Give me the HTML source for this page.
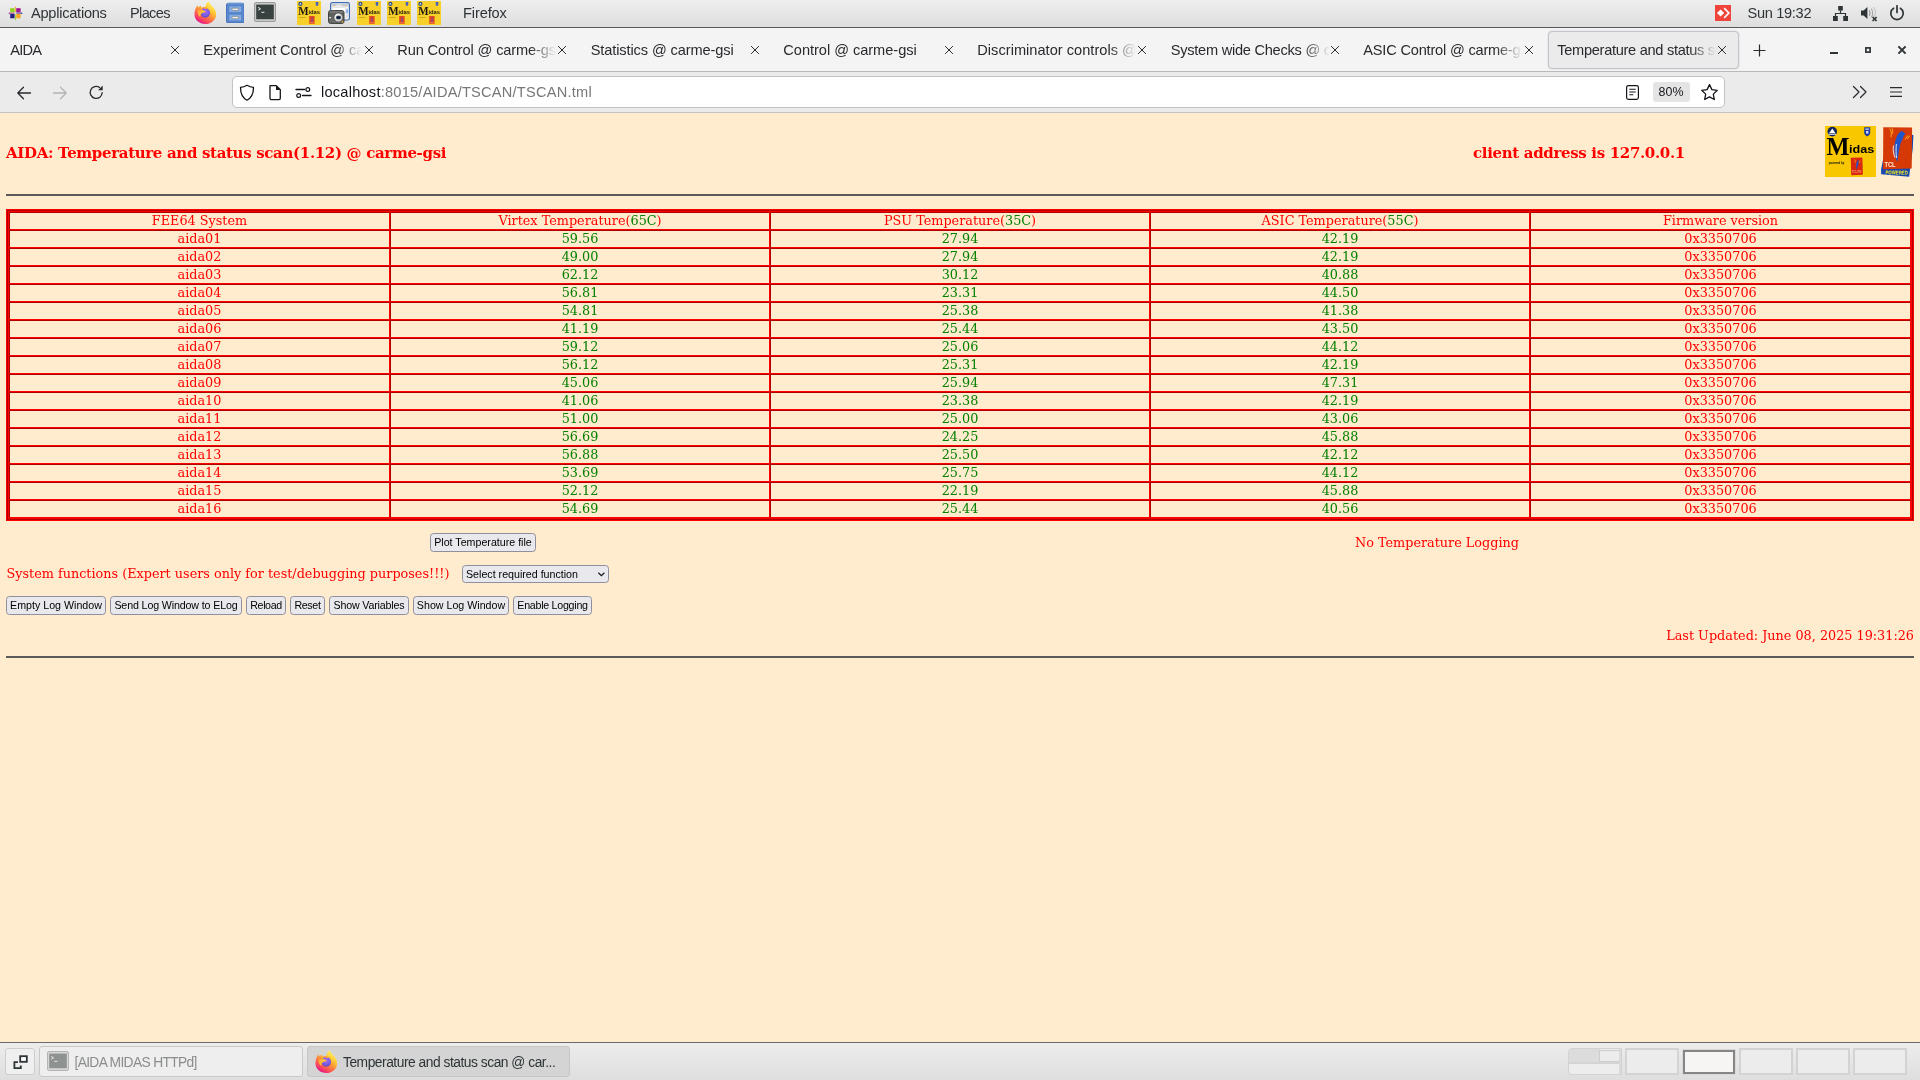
<!DOCTYPE html>
<html lang="en">
<head>
<meta charset="utf-8">
<title>Temperature and status scan @ carme-gsi</title>
<style>
html,body{margin:0;padding:0;}
body{width:1920px;height:1080px;overflow:hidden;position:relative;background:#ffebcd;font-family:"Liberation Sans","DejaVu Sans",sans-serif;}
#root{position:absolute;left:0;top:0;width:1920px;height:1080px;will-change:transform;}
.abs{position:absolute;}
/* ---------- GNOME top bar ---------- */
#topbar{position:absolute;left:0;top:0;width:1920px;height:27px;background:linear-gradient(#eeeeee,#dedede);border-bottom:1px solid #585858;}
#topbar .t{position:absolute;top:0;height:27px;line-height:26px;font-size:14.6px;color:#2e3436;white-space:nowrap;}
/* ---------- Firefox tab bar ---------- */
#tabbar{position:absolute;left:0;top:28px;width:1920px;height:43px;background:#f4f4f4;border-bottom:1px solid #b9b9b9;}
.tab{position:absolute;top:0.700px;height:43px;width:168px;overflow:hidden;white-space:nowrap;font-size:14.6px;line-height:42px;color:#2a2a2e;}
.tab.fade{-webkit-mask-image:linear-gradient(90deg,#000 0,#000 calc(100% - 26px),transparent 100%);mask-image:linear-gradient(90deg,#000 0,#000 calc(100% - 26px),transparent 100%);}
.tx{position:absolute;top:0;height:43px;line-height:42px;width:12px;text-align:center;}
#acttab{position:absolute;left:1548px;top:3px;width:189px;height:36px;border:1px solid #c3c3cb;border-radius:4px;background:#ebebeb;box-shadow:0 0 2px rgba(0,0,0,.15);}
/* ---------- Firefox toolbar ---------- */
#toolbar{position:absolute;left:0;top:72px;width:1920px;height:40px;background:#ebebeb;border-bottom:1px solid #c2c2c2;}
#urlbar{position:absolute;left:232px;top:4px;width:1491px;height:30px;background:#fff;border:1px solid #c2c2c6;border-radius:5px;}
#urltext{position:absolute;left:88px;top:1px;letter-spacing:0.231px;height:30px;line-height:29px;font-size:14.6px;color:#77777a;white-space:nowrap;}
#urltext b{font-weight:normal;color:#15141a;}
#zoombadge{position:absolute;left:1419.500px;top:5px;width:37px;height:20px;background:#e4e4e4;border-radius:3px;font-size:12.4px;line-height:20px;text-align:center;color:#15141a;}
/* ---------- page ---------- */
#page{position:absolute;left:0;top:113px;width:1920px;height:929px;background:#ffebcd;font-family:"DejaVu Serif","Liberation Serif",serif;color:#f00;}
.hr{position:absolute;left:6px;width:1908px;height:2px;background:#5b5b5b;}
.h{position:absolute;font-weight:bold;font-size:14.98px;letter-spacing:-0.32px;white-space:nowrap;line-height:20px;}
.p{position:absolute;font-size:12.8px;white-space:nowrap;line-height:16px;}
/* table */
#tb{position:absolute;left:6px;top:96px;width:1908px;height:312px;background:#f00;}
#tb .r2{position:absolute;left:1px;top:1px;right:1px;bottom:1px;background:#b00000;}
#tb .r3{position:absolute;left:1px;top:1px;right:1px;bottom:1px;background:#f00;}
#tb table{position:absolute;left:1px;top:1px;width:1902px;height:306px;border-collapse:separate;border-spacing:0;table-layout:fixed;background:#ffebcd;}
#tb td{height:16px;padding:0;border:1px solid;border-color:#b00000 #f00 #f00 #b00000;text-align:center;font-size:12.8px;line-height:16px;color:#f00;overflow:hidden;white-space:nowrap;}
#tb td.g{color:#008000;}
#tb span.g{color:#008000;}
/* form controls */
.btn{position:absolute;height:19px;box-sizing:border-box;border:1px solid #8f8f9d;border-radius:3.5px;background:#e9e9ed;color:#000;font-family:"Liberation Sans","DejaVu Sans",sans-serif;font-size:10.67px;line-height:17px;text-align:center;white-space:nowrap;}
/* ---------- bottom panel ---------- */
.ws{top:5px;width:54px;height:27px;box-sizing:border-box;border:2px solid #d3d3d3;background:#ececec;}
#panel{position:absolute;left:0;top:1042px;width:1920px;height:38px;background:linear-gradient(#ededed,#dedede);border-top:1px solid #6a6a6a;box-sizing:border-box;}
</style>
</head>
<body>
<div id="root">
<div id="topbar">
<svg class="abs" style="left:8px;top:6px" width="15" height="15" viewBox="0 0 15 15"><rect x="2.200" y="2.200" width="4.400" height="4.200" fill="#93d31e"/><rect x="8.200" y="2.200" width="4.400" height="4.200" fill="#a3158c"/><rect x="2.200" y="7.900" width="4.400" height="4.400" fill="#27207f"/><rect x="8.200" y="7.900" width="4.400" height="4.400" fill="#f9a825"/><path d="M7.400 0.400l1 1.200h-.6v5h-.8v-5h-.6z" fill="#f9a825"/><path d="M14.600 7.200l-1.200 1v-.6h-5v-.8h5v-.6z" fill="#27207f"/><path d="M7.400 14.400l-1-1.200h.6v-5h.8v5h.6z" fill="#93d31e"/><path d="M0.400 7.200l1.200-1v.6h5v.8h-5v.6z" fill="#a3158c"/></svg>
<div class="t" style="left:31px;letter-spacing:-0.253px">Applications</div>
<div class="t" style="left:130px;letter-spacing:-0.667px">Places</div>
<svg class="abs" style="left:193.5px;top:0.8px" width="22.6" height="23.4" viewBox="0 0 23 24"><defs><linearGradient id="faa" x1="0.800" y1="0.080" x2="0.250" y2="0.950"><stop offset="0" stop-color="#fff36a"/><stop offset="0.300" stop-color="#ffc934"/><stop offset="0.550" stop-color="#ff8a3a"/><stop offset="0.800" stop-color="#fa4b5c"/><stop offset="1" stop-color="#e31587"/></linearGradient><radialGradient id="fab" cx="0.500" cy="0.350" r="0.700"><stop offset="0" stop-color="#a466ff"/><stop offset="0.600" stop-color="#7a5fe0"/><stop offset="1" stop-color="#5a3fc0"/></radialGradient><linearGradient id="fac" x1="0" y1="0" x2="1" y2="0.600"><stop offset="0" stop-color="#ff9a3c"/><stop offset="0.600" stop-color="#ffc234"/><stop offset="1" stop-color="#ffb030"/></linearGradient></defs><path d="M14.800 0.200c1.200 2.400 2.400 3.600 3.800 5.200 2.600 2.200 4 5 4 8.400C22.600 19.400 17.600 23.600 11.500 23.600S0.400 19.400 0.400 13.600c0-3.200 1-6.400 3.200-9.200.2 1 .5 1.600 1 2.200C5.200 5.800 6 5 6.800 4.600c.2 1 .6 1.600 1.200 2.200C9.200 6.200 10.400 6 11.400 6.200 11.800 3.600 13 1.400 14.800 0.200z" fill="url(#faa)"/><circle cx="11.500" cy="12.200" r="4.900" fill="url(#fab)"/><path d="M3.400 9.800c2.400-1 5-1 7.400.2 1 .6 1.200 1.200 1 1.800-2-.4-3.800.2-4.800 1.600-.6 1-.8 2-.6 3C4.600 15.400 3.400 12.800 3.400 9.800z" fill="url(#fac)"/><path d="M8.200 6.800c1.400-.6 3.800-.6 5.600.8-.8.200-1.400.6-1.600 1-1-1-2.600-1.400-4-1.800z" fill="#ff9a3c"/></svg>
<svg class="abs" style="left:225.800px;top:1.800px" width="18.600" height="21.400" viewBox="0 0 20 22" preserveAspectRatio="none"><rect x="0.500" y="1.500" width="19" height="20" rx="1.500" fill="#5d8cd3" stroke="#3f6db4"/><path d="M1.500 1.500l1.500-1h14l1.500 1z" fill="#8fb4e8"/><rect x="3" y="4" width="14" height="7" fill="#86ade4" stroke="#4a78c0" stroke-width="0.800"/><rect x="3" y="12.500" width="14" height="7" fill="#86ade4" stroke="#4a78c0" stroke-width="0.800"/><rect x="6.500" y="6.300" width="7" height="2.400" rx="0.500" fill="#f3f3f0" stroke="#777" stroke-width="0.700"/><rect x="6.500" y="14.800" width="7" height="2.400" rx="0.500" fill="#f3f3f0" stroke="#777" stroke-width="0.700"/></svg>
<svg class="abs" style="left:254px;top:2px" width="22" height="20" viewBox="0 0 22 20"><rect x="0.5" y="0.5" width="21" height="19" rx="1.5" fill="#c9c9c7" stroke="#9a9a98"/><rect x="2.2" y="2.6" width="17.600" height="14.600" fill="#3a4141"/><path d="M4.200 5.400l2.400 1.400-2.400 1.400" stroke="#e8e8e8" stroke-width="1" fill="none"/><rect x="7.400" y="9.800" width="3" height="1" fill="#e8e8e8"/></svg>
<svg class="abs" style="left:297px;top:1px" width="24" height="24" viewBox="0 0 24 24"><rect width="24" height="24" fill="#f7d02a"/><circle cx="3.400" cy="2.900" r="2.100" fill="#2b4a86"/><path d="M3.400 1.700l1.300 1.900H2.100z" fill="#e8eefc"/><path d="M18.700 1h2.600v2.200c0 .9-.6 1.500-1.300 1.900-.7-.4-1.300-1-1.300-1.900z" fill="#4a63b8"/><text x="1.300" y="13.800" font-family="Liberation Serif,serif" font-weight="bold" font-size="12" fill="#1d1a10" textLength="10.400" lengthAdjust="spacingAndGlyphs">M</text><text x="11.400" y="13.200" font-family="Liberation Sans,sans-serif" font-weight="bold" font-size="5.800" fill="#26220f" textLength="11.600" lengthAdjust="spacingAndGlyphs">idas</text><rect x="2" y="16.300" width="6.600" height="0.700" fill="#b39a22"/><rect x="12.200" y="15" width="5.400" height="7.800" fill="#e2471d"/><path d="M15 16.400c.6 1.200.2 3-.4 5" stroke="#5a55b8" stroke-width="1" fill="none"/><rect x="12.800" y="21.200" width="4.200" height="0.800" fill="#f07a4a"/></svg>
<svg class="abs" style="left:328px;top:2px" width="22" height="22" viewBox="0 0 22 22"><defs><linearGradient id="cb" x1="0" y1="0" x2="0" y2="1"><stop offset="0" stop-color="#8e908d"/><stop offset="0.250" stop-color="#5c5e5b"/><stop offset="1" stop-color="#6e706d"/></linearGradient><radialGradient id="cl" cx="0.350" cy="0.300" r="0.800"><stop offset="0" stop-color="#ffffff"/><stop offset="1" stop-color="#b9bab7"/></radialGradient></defs><rect x="2.600" y="0.600" width="18.800" height="17.400" rx="1.800" fill="#f6f6f6" stroke="#3d6bb5" stroke-width="1.200"/><rect x="3.400" y="2" width="17.200" height="2.400" fill="#c9c9c9"/><rect x="8.400" y="2.600" width="5" height="1.800" fill="#ececec"/><rect x="4.600" y="5.600" width="13" height="10.400" fill="#ffffff" stroke="#dcdcdc" stroke-width="0.600"/><rect x="18.300" y="6" width="1.500" height="10" fill="#dfe3ea"/><rect x="18.300" y="7.400" width="1.500" height="3.600" fill="#6da2e8"/><rect x="0.600" y="8.600" width="15.400" height="12.800" rx="1.800" fill="url(#cb)" stroke="#3a3c39" stroke-width="1"/><rect x="3.200" y="8" width="3" height="1.200" fill="#5c5e5b"/><rect x="1.200" y="15" width="1.800" height="1.400" fill="#e8e8e8"/><circle cx="10.400" cy="15.600" r="4.500" fill="url(#cl)" stroke="#4a4c49" stroke-width="0.700"/><rect x="8.400" y="13.800" width="4.200" height="3.400" rx="0.600" fill="#1d2f55"/><rect x="8.400" y="15" width="4.200" height="1" fill="#0c1220"/><rect x="13.800" y="19.200" width="1.600" height="1.400" fill="#e7a21c"/></svg>
<svg class="abs" style="left:357px;top:1px" width="24" height="24" viewBox="0 0 24 24"><rect width="24" height="24" fill="#f7d02a"/><circle cx="3.400" cy="2.900" r="2.100" fill="#2b4a86"/><path d="M3.400 1.700l1.300 1.900H2.100z" fill="#e8eefc"/><path d="M18.700 1h2.600v2.200c0 .9-.6 1.500-1.300 1.900-.7-.4-1.300-1-1.300-1.900z" fill="#4a63b8"/><text x="1.300" y="13.800" font-family="Liberation Serif,serif" font-weight="bold" font-size="12" fill="#1d1a10" textLength="10.400" lengthAdjust="spacingAndGlyphs">M</text><text x="11.400" y="13.200" font-family="Liberation Sans,sans-serif" font-weight="bold" font-size="5.800" fill="#26220f" textLength="11.600" lengthAdjust="spacingAndGlyphs">idas</text><rect x="2" y="16.300" width="6.600" height="0.700" fill="#b39a22"/><rect x="12.200" y="15" width="5.400" height="7.800" fill="#e2471d"/><path d="M15 16.400c.6 1.200.2 3-.4 5" stroke="#5a55b8" stroke-width="1" fill="none"/><rect x="12.800" y="21.200" width="4.200" height="0.800" fill="#f07a4a"/></svg>
<svg class="abs" style="left:387px;top:1px" width="24" height="24" viewBox="0 0 24 24"><rect width="24" height="24" fill="#f7d02a"/><circle cx="3.400" cy="2.900" r="2.100" fill="#2b4a86"/><path d="M3.400 1.700l1.300 1.900H2.100z" fill="#e8eefc"/><path d="M18.700 1h2.600v2.200c0 .9-.6 1.500-1.300 1.900-.7-.4-1.300-1-1.300-1.900z" fill="#4a63b8"/><text x="1.300" y="13.800" font-family="Liberation Serif,serif" font-weight="bold" font-size="12" fill="#1d1a10" textLength="10.400" lengthAdjust="spacingAndGlyphs">M</text><text x="11.400" y="13.200" font-family="Liberation Sans,sans-serif" font-weight="bold" font-size="5.800" fill="#26220f" textLength="11.600" lengthAdjust="spacingAndGlyphs">idas</text><rect x="2" y="16.300" width="6.600" height="0.700" fill="#b39a22"/><rect x="12.200" y="15" width="5.400" height="7.800" fill="#e2471d"/><path d="M15 16.400c.6 1.200.2 3-.4 5" stroke="#5a55b8" stroke-width="1" fill="none"/><rect x="12.800" y="21.200" width="4.200" height="0.800" fill="#f07a4a"/></svg>
<svg class="abs" style="left:417px;top:1px" width="24" height="24" viewBox="0 0 24 24"><rect width="24" height="24" fill="#f7d02a"/><circle cx="3.400" cy="2.900" r="2.100" fill="#2b4a86"/><path d="M3.400 1.700l1.300 1.900H2.100z" fill="#e8eefc"/><path d="M18.700 1h2.600v2.200c0 .9-.6 1.500-1.300 1.900-.7-.4-1.300-1-1.300-1.900z" fill="#4a63b8"/><text x="1.300" y="13.800" font-family="Liberation Serif,serif" font-weight="bold" font-size="12" fill="#1d1a10" textLength="10.400" lengthAdjust="spacingAndGlyphs">M</text><text x="11.400" y="13.200" font-family="Liberation Sans,sans-serif" font-weight="bold" font-size="5.800" fill="#26220f" textLength="11.600" lengthAdjust="spacingAndGlyphs">idas</text><rect x="2" y="16.300" width="6.600" height="0.700" fill="#b39a22"/><rect x="12.200" y="15" width="5.400" height="7.800" fill="#e2471d"/><path d="M15 16.400c.6 1.200.2 3-.4 5" stroke="#5a55b8" stroke-width="1" fill="none"/><rect x="12.800" y="21.200" width="4.200" height="0.800" fill="#f07a4a"/></svg>
<div class="t" style="left:463px;letter-spacing:-0.114px">Firefox</div>
<svg class="abs" style="left:1715px;top:5px" width="16" height="16" viewBox="0 0 16 16"><rect width="16" height="16" fill="#ef443b"/><path d="M5.600 4.400L9.200 8l-3.600 3.600L2 8z" fill="#fff"/><path d="M8.600 3.700l1.100-1.100L15 8l-5.300 5.400-1.100-1.100L12.800 8z" fill="#fff"/></svg>
<div class="t" style="left:1747.500px;letter-spacing:-0.314px">Sun 19:32</div>
<svg class="abs" style="left:1833px;top:6px" width="15" height="15" viewBox="0 0 15 15"><g fill="#2e3436"><rect x="5.200" y="0" width="4.600" height="4.600"/><rect x="0" y="10" width="4.800" height="5"/><rect x="10.200" y="10" width="4.800" height="5"/><path d="M6.900 4.600h1.200v2.300h5v3.100h-1.200V8.100H3.100V10H1.900V6.900h5z"/></g></svg>
<svg class="abs" style="left:1861px;top:5px" width="17" height="17" viewBox="0 0 17 17"><path d="M0 5.500h2.600L6.400 2v12L2.600 10.500H0z" fill="#2e3436"/><path d="M8.200 5.400c1 .9 1 4.300 0 5.200" stroke="#8a8d8e" stroke-width="1.100" fill="none"/><path d="M10.200 3.600c2 2 2 6.800 0 8.800" stroke="#a3a6a7" stroke-width="1.100" fill="none"/><path d="M12.200 2c3 3 3 8.400.2 10" stroke="#bdbfc0" stroke-width="1" fill="none"/><path d="M11.600 12l4 4M15.600 12l-4 4" stroke="#2e3436" stroke-width="1.700"/></svg>
<svg class="abs" style="left:1889px;top:4.700px" width="16" height="16" viewBox="0 0 16 16"><path d="M4.600 3.300A6.200 6.200 0 1 0 11.400 3.300" stroke="#2e3436" stroke-width="1.700" fill="none" stroke-linecap="round"/><path d="M8 0.800v6.600" stroke="#2e3436" stroke-width="1.700" stroke-linecap="round"/></svg>
</div>
<div id="tabbar">
<div id="acttab"></div>
<div class="tab" style="left:10.3px;width:165px;letter-spacing:-0.805px">AIDA</div>
<svg class="abs" style="left:169px;top:15.800px" width="12" height="12" viewBox="0 0 12 12"><path d="M2.100 2.100L9.900 9.900M9.900 2.100L2.100 9.900" stroke="#2a2a2e" stroke-width="1" fill="none"/></svg>
<div class="tab fade" style="left:203.3px;width:159px;letter-spacing:-0.100px">Experiment Control @ carme-gsi</div>
<svg class="abs" style="left:362.8px;top:15.800px" width="12" height="12" viewBox="0 0 12 12"><path d="M2.100 2.100L9.900 9.900M9.900 2.100L2.100 9.900" stroke="#2a2a2e" stroke-width="1" fill="none"/></svg>
<div class="tab fade" style="left:397.3px;width:159px;letter-spacing:-0.140px">Run Control @ carme-gsi</div>
<svg class="abs" style="left:555.7px;top:15.800px" width="12" height="12" viewBox="0 0 12 12"><path d="M2.100 2.100L9.900 9.900M9.900 2.100L2.100 9.900" stroke="#2a2a2e" stroke-width="1" fill="none"/></svg>
<div class="tab" style="left:590.7px;width:165px;letter-spacing:-0.109px">Statistics @ carme-gsi</div>
<svg class="abs" style="left:749px;top:15.800px" width="12" height="12" viewBox="0 0 12 12"><path d="M2.100 2.100L9.900 9.900M9.900 2.100L2.100 9.900" stroke="#2a2a2e" stroke-width="1" fill="none"/></svg>
<div class="tab" style="left:783.3px;width:165px;letter-spacing:-0.032px">Control @ carme-gsi</div>
<svg class="abs" style="left:943px;top:15.800px" width="12" height="12" viewBox="0 0 12 12"><path d="M2.100 2.100L9.900 9.900M9.900 2.100L2.100 9.900" stroke="#2a2a2e" stroke-width="1" fill="none"/></svg>
<div class="tab fade" style="left:977.3px;width:159px;letter-spacing:0.020px">Discriminator controls @ carme-gsi</div>
<svg class="abs" style="left:1135.7px;top:15.800px" width="12" height="12" viewBox="0 0 12 12"><path d="M2.100 2.100L9.900 9.900M9.900 2.100L2.100 9.900" stroke="#2a2a2e" stroke-width="1" fill="none"/></svg>
<div class="tab fade" style="left:1170.7px;width:159px;letter-spacing:-0.25px">System wide Checks @ carme-gsi</div>
<svg class="abs" style="left:1329px;top:15.800px" width="12" height="12" viewBox="0 0 12 12"><path d="M2.100 2.100L9.900 9.900M9.900 2.100L2.100 9.900" stroke="#2a2a2e" stroke-width="1" fill="none"/></svg>
<div class="tab fade" style="left:1363.3px;width:159px;letter-spacing:-0.2px">ASIC Control @ carme-gsi</div>
<svg class="abs" style="left:1523px;top:15.800px" width="12" height="12" viewBox="0 0 12 12"><path d="M2.100 2.100L9.900 9.900M9.900 2.100L2.100 9.900" stroke="#2a2a2e" stroke-width="1" fill="none"/></svg>
<div class="tab fade" style="left:1557.3px;width:159px;letter-spacing:-0.3px">Temperature and status scan @ carme-gsi</div>
<svg class="abs" style="left:1715.7px;top:15.800px" width="12" height="12" viewBox="0 0 12 12"><path d="M2.100 2.100L9.900 9.900M9.900 2.100L2.100 9.900" stroke="#2a2a2e" stroke-width="1" fill="none"/></svg>
<svg class="abs" style="left:1752px;top:15px" width="15" height="15" viewBox="0 0 15 15"><path d="M7.500 1.500v12M1.500 7.500h12" stroke="#2a2a2e" stroke-width="1.200"/></svg>
<svg class="abs" style="left:1829px;top:23px" width="10" height="4" viewBox="0 0 10 4"><rect x="1" y="1" width="8" height="2" fill="#2e3436"/></svg>
<svg class="abs" style="left:1864.300px;top:18px" width="8" height="8" viewBox="0 0 8 8"><rect x="1.900" y="1.900" width="4.200" height="4.200" fill="none" stroke="#2e3436" stroke-width="1.700"/></svg>
<svg class="abs" style="left:1895.7px;top:16px" width="12" height="12" viewBox="0 0 12 12"><path d="M2.4 2.4L9.6 9.6M9.6 2.4L2.4 9.6" stroke="#2e3436" stroke-width="2" fill="none"/></svg>
</div>
<div id="toolbar">
<svg class="abs" style="left:16px;top:13px" width="16" height="16" viewBox="0 0 16 16"><path d="M14.500 8H2M7.500 2.300L1.800 8l5.700 5.700" stroke="#2a2a2e" stroke-width="1.300" fill="none" stroke-linecap="round" stroke-linejoin="round"/></svg>
<svg class="abs" style="left:52px;top:13px" width="16" height="16" viewBox="0 0 16 16"><path d="M1.500 8H14M8.500 2.300L14.200 8l-5.700 5.700" stroke="#b4b4b6" stroke-width="1.300" fill="none" stroke-linecap="round" stroke-linejoin="round"/></svg>
<svg class="abs" style="left:88px;top:12px" width="17" height="17" viewBox="0 0 17 17"><path d="M14.200 8.600A6 6 0 1 1 11.600 3.500" stroke="#2a2a2e" stroke-width="1.300" fill="none" stroke-linecap="round"/><path d="M14.700 1.600v4.600h-4.600z" fill="#2a2a2e"/></svg>
<div id="urlbar">
<svg class="abs" style="left:5px;top:7px" width="18" height="18" viewBox="0 0 18 18"><path d="M9 1.300c2.200 1.400 4.300 2 6.500 2.100 0 6-2 10.300-6.500 12.800C4.500 13.700 2.500 9.400 2.500 3.400 4.700 3.300 6.800 2.700 9 1.300z" fill="none" stroke="#15141a" stroke-width="1.300" stroke-linejoin="round"/></svg>
<svg class="abs" style="left:34px;top:7px" width="16" height="17" viewBox="0 0 16 17"><path d="M3 1.700h6.300l4 4v8.600a1.300 1.300 0 0 1-1.300 1.300H4.300A1.300 1.300 0 0 1 3 14.300z" fill="none" stroke="#15141a" stroke-width="1.300" stroke-linejoin="round"/><path d="M9 1.700v4.300h4.300z" fill="#15141a"/></svg>
<svg class="abs" style="left:62px;top:9px" width="17" height="13" viewBox="0 0 17 13"><path d="M1 3.500h8.500M7.500 9.500H16" stroke="#15141a" stroke-width="1.300" stroke-linecap="round"/><circle cx="12.800" cy="3.500" r="1.900" fill="none" stroke="#15141a" stroke-width="1.200"/><circle cx="3.700" cy="9.500" r="1.900" fill="none" stroke="#15141a" stroke-width="1.200"/></svg>
<div id="urltext"><b>localhost</b>:8015/AIDA/TSCAN/TSCAN.tml</div>
<svg class="abs" style="left:1392px;top:7px" width="15" height="17" viewBox="0 0 15 17"><rect x="1.600" y="1.600" width="11.800" height="13.800" rx="1.800" fill="none" stroke="#15141a" stroke-width="1.200"/><path d="M4.300 5.200h6.400M4.300 8h6.400M4.300 10.800h4" stroke="#15141a" stroke-width="1.100"/></svg>
<div id="zoombadge">80%</div>
<svg class="abs" style="left:1467px;top:6px" width="19" height="18" viewBox="0 0 19 18"><path d="M9.500 1.600l2.400 5 5.400.7-4 3.800 1 5.400-4.800-2.600-4.800 2.600 1-5.400-4-3.800 5.400-.7z" fill="none" stroke="#15141a" stroke-width="1.300" stroke-linejoin="round"/></svg>
</div>
<svg class="abs" style="left:1852px;top:13px" width="16" height="14" viewBox="0 0 16 14"><path d="M1.500 1.500L7 7l-5.500 5.500M8.500 1.500L14 7l-5.500 5.500" stroke="#2a2a2e" stroke-width="1.300" fill="none" stroke-linecap="round" stroke-linejoin="round"/></svg>
<svg class="abs" style="left:1889px;top:14px" width="14" height="12" viewBox="0 0 14 12"><path d="M1 1.700h12M1 6h12M1 10.300h12" stroke="#2a2a2e" stroke-width="1.200"/></svg>
</div>
<div id="page">
<div class="h" style="left:6px;top:30px">AIDA: Temperature and status scan(1.12) @ carme-gsi</div>
<div class="h" style="left:1473px;top:30px">client address is 127.0.0.1</div>
<svg id="midas" class="abs" style="left:1825px;top:13px" width="51" height="51" viewBox="0 0 51 51"><rect width="51" height="51" fill="#f8c700"/>
<circle cx="7.300" cy="5.600" r="4.800" fill="#14245c"/><path d="M7.300 2.600l3.200 4.600H4.100z" fill="#fff"/><path d="M3.400 7.800h7.800v1H3.400z" fill="#dfe6f5"/>
<path d="M39.200 1.200h6v5.200c0 2-1.400 3.200-3 4-1.600-.8-3-2-3-4z" fill="#1f3fa8"/><path d="M40.400 2.600h3.600v1.200h-3.600zM41 5h2.400v2.600H41z" fill="#cfd8f4"/>
<text x="1.600" y="29" font-family="Liberation Serif,serif" font-weight="bold" font-size="25.500" fill="#000" textLength="23" lengthAdjust="spacingAndGlyphs">M</text>
<text x="24" y="27.300" font-family="Liberation Sans,sans-serif" font-weight="bold" font-size="11.500" fill="#000" textLength="25.400" lengthAdjust="spacingAndGlyphs">idas</text>
<text x="3.800" y="37.600" font-family="Liberation Sans,sans-serif" font-weight="bold" font-size="3.400" fill="#111" textLength="15.600" lengthAdjust="spacingAndGlyphs">powered by</text>
<rect x="26" y="31.600" width="11.600" height="17.400" fill="#d9260f" transform="rotate(-1.500 32 40)"/>
<path d="M33.200 34c1.400 1.600-.4 5.600-1.600 9.800-.8-3.400-.6-8 1.600-9.800z" fill="#2550c4"/><path d="M29.400 33.400c.8 1 1 2 .8 3.200M35.400 34.600c-.6.600-.8 1.400-.8 2.200" stroke="#ffb21c" stroke-width="0.700" fill="none"/>
<text x="27" y="47.400" font-family="Liberation Sans,sans-serif" font-weight="bold" font-size="2.600" fill="#ff9d7a" textLength="9.400" lengthAdjust="spacingAndGlyphs">TCL/TK</text>
</svg>
<svg id="tcl" class="abs" style="left:1880px;top:13px" width="34" height="51" viewBox="0 0 34 51">
<path d="M1.100 43.400l2.200-11 28.600-23.600 1.500.3-.6 13.200-3.700 28.500L1.100 48.300z" fill="#1748b0"/>
<path d="M3.300 1.300L32.100 1.600l-.4 41-28.700.6z" fill="#d53a06"/>
<path d="M21.600 5c2.200.8 3.400 2 3.600 3.400-1 .2-1.800 1.400-2.200 3.600-.6 1.800-1.600 3-2.400 5.600-1.400 4.600-2.200 10.800-3.200 18.400-1.600-3.400-3-8-3-13 0-8.400 3-16.400 7.200-18z" fill="#1f55c8"/>
<path d="M13.400 19.600c-.6 4 .2 8.600 1.600 12M16.400 18c-.6 5.200-.4 9.600.2 14" stroke="#f0f3fc" stroke-width="0.900" fill="none"/>
<path d="M9.800 2.600c1.400 2.200 1.800 5 1.200 8.600M12 2.400c.8 1.800 1 3.400.6 5.400M25.400 13.600c.4-1.800 1.400-3.200 3-4.200M27.600 13c.4-1.400 1.200-2.400 2.200-3.200" stroke="#ffb01e" stroke-width="1" fill="none"/>
<text x="4.400" y="41.400" font-family="Liberation Sans,sans-serif" font-weight="bold" font-size="6.400" fill="#ffe9dc" textLength="11.200" lengthAdjust="spacingAndGlyphs">TCL</text>
<text x="5.500" y="48.400" font-family="Liberation Sans,sans-serif" font-weight="bold" font-size="5.400" fill="#f3e418" textLength="22.300" lengthAdjust="spacingAndGlyphs" transform="rotate(1.200 15 47)">POWERED</text>
</svg>
<div class="hr" style="top:81px"></div>
<div id="tb"><div class="r2"><div class="r3"><table><colgroup><col style="width:381px"><col style="width:380px"><col style="width:380px"><col style="width:380px"><col style="width:381px"></colgroup>
<tr><td>FEE64 System</td><td>Virtex Temperature(<span class="g">65C</span>)</td><td>PSU Temperature(<span class="g">35C</span>)</td><td>ASIC Temperature(<span class="g">55C</span>)</td><td>Firmware version</td></tr>
<tr><td>aida01</td><td class="g">59.56</td><td class="g">27.94</td><td class="g">42.19</td><td>0x3350706</td></tr>
<tr><td>aida02</td><td class="g">49.00</td><td class="g">27.94</td><td class="g">42.19</td><td>0x3350706</td></tr>
<tr><td>aida03</td><td class="g">62.12</td><td class="g">30.12</td><td class="g">40.88</td><td>0x3350706</td></tr>
<tr><td>aida04</td><td class="g">56.81</td><td class="g">23.31</td><td class="g">44.50</td><td>0x3350706</td></tr>
<tr><td>aida05</td><td class="g">54.81</td><td class="g">25.38</td><td class="g">41.38</td><td>0x3350706</td></tr>
<tr><td>aida06</td><td class="g">41.19</td><td class="g">25.44</td><td class="g">43.50</td><td>0x3350706</td></tr>
<tr><td>aida07</td><td class="g">59.12</td><td class="g">25.06</td><td class="g">44.12</td><td>0x3350706</td></tr>
<tr><td>aida08</td><td class="g">56.12</td><td class="g">25.31</td><td class="g">42.19</td><td>0x3350706</td></tr>
<tr><td>aida09</td><td class="g">45.06</td><td class="g">25.94</td><td class="g">47.31</td><td>0x3350706</td></tr>
<tr><td>aida10</td><td class="g">41.06</td><td class="g">23.38</td><td class="g">42.19</td><td>0x3350706</td></tr>
<tr><td>aida11</td><td class="g">51.00</td><td class="g">25.00</td><td class="g">43.06</td><td>0x3350706</td></tr>
<tr><td>aida12</td><td class="g">56.69</td><td class="g">24.25</td><td class="g">45.88</td><td>0x3350706</td></tr>
<tr><td>aida13</td><td class="g">56.88</td><td class="g">25.50</td><td class="g">42.12</td><td>0x3350706</td></tr>
<tr><td>aida14</td><td class="g">53.69</td><td class="g">25.75</td><td class="g">44.12</td><td>0x3350706</td></tr>
<tr><td>aida15</td><td class="g">52.12</td><td class="g">22.19</td><td class="g">45.88</td><td>0x3350706</td></tr>
<tr><td>aida16</td><td class="g">54.69</td><td class="g">25.44</td><td class="g">40.56</td><td>0x3350706</td></tr>
</table></div></div></div>
<div class="btn" style="left:430px;top:420px;width:106px">Plot Temperature file</div>
<div class="p" style="left:1355px;top:422px">No Temperature Logging</div>
<div class="p" style="left:6.5px;top:453px">System functions (Expert users only for test/debugging purposes!!!)</div>
<div class="btn" id="sel" style="left:462px;top:452px;width:147px;height:18px;line-height:16px;text-align:left;padding-left:3px">Select required function<svg style="position:absolute;left:134px;top:5px" width="9" height="7" viewBox="0 0 9 7"><path d="M1.400 1.700 L4.400 4.600 L7.400 1.700" fill="none" stroke="#15141a" stroke-width="1.200"/></svg></div>
<div class="btn" style="left:6px;top:483px;width:100px">Empty Log Window</div>
<div class="btn" style="left:110px;top:483px;width:132px;letter-spacing:-0.130px">Send Log Window to ELog</div>
<div class="btn" style="left:246px;top:483px;width:40px;letter-spacing:-0.400px">Reload</div>
<div class="btn" style="left:290px;top:483px;width:35px;letter-spacing:-0.340px">Reset</div>
<div class="btn" style="left:329px;top:483px;width:80px;letter-spacing:-0.160px">Show Variables</div>
<div class="btn" style="left:413px;top:483px;width:96px">Show Log Window</div>
<div class="btn" style="left:513px;top:483px;width:79px;letter-spacing:-0.260px">Enable Logging</div>
<div class="p" style="right:6px;top:515px">Last Updated: June 08, 2025 19:31:26</div>
<div class="hr" style="top:543px"></div>
</div>
<div id="panel">
<div class="abs" style="left:5px;top:5px;width:30px;height:27px;box-sizing:border-box;border:1px solid #cdcdcd;border-radius:3px;background:#efefef"></div>
<svg class="abs" style="left:13px;top:12px" width="15" height="15" viewBox="0 0 15 15"><rect x="7.200" y="1.200" width="6.600" height="5.600" fill="#fff" stroke="#2e3436" stroke-width="1.800"/><path d="M5 7.200H1.400v6h6.400V10.600" fill="none" stroke="#2e3436" stroke-width="1.800"/></svg>
<div class="abs" style="left:39px;top:3px;width:264px;height:31px;box-sizing:border-box;border:1px solid #c9c9c9;border-radius:3px;background:#eeeeee"></div>
<svg class="abs" style="left:47px;top:8px" width="22" height="20" viewBox="0 0 22 20"><rect x="0.500" y="0.500" width="21" height="19" rx="1.500" fill="#d6d6d4" stroke="#b4b4b2"/><rect x="2.200" y="2.600" width="17.600" height="14.600" fill="#8e9291"/><path d="M4.200 5.400l2.400 1.400-2.400 1.400" stroke="#e8e8e8" stroke-width="1" fill="none"/><rect x="7.400" y="9.800" width="3" height="1" fill="#e8e8e8"/></svg>
<div class="abs" style="left:74.500px;top:5px;height:30px;line-height:30px;font-size:13.800px;letter-spacing:-0.665px;color:#8b8d8d;white-space:nowrap">[AIDA MIDAS HTTPd]</div>
<div class="abs" style="left:307px;top:3px;width:263px;height:31px;box-sizing:border-box;border:1px solid #c6c6c6;border-radius:3px;background:#d4d4d4"></div>
<svg class="abs" style="left:314.7px;top:7.300px" width="22.6" height="23.4" viewBox="0 0 23 24"><defs><linearGradient id="fba" x1="0.800" y1="0.080" x2="0.250" y2="0.950"><stop offset="0" stop-color="#fff36a"/><stop offset="0.300" stop-color="#ffc934"/><stop offset="0.550" stop-color="#ff8a3a"/><stop offset="0.800" stop-color="#fa4b5c"/><stop offset="1" stop-color="#e31587"/></linearGradient><radialGradient id="fbb" cx="0.500" cy="0.350" r="0.700"><stop offset="0" stop-color="#a466ff"/><stop offset="0.600" stop-color="#7a5fe0"/><stop offset="1" stop-color="#5a3fc0"/></radialGradient><linearGradient id="fbc" x1="0" y1="0" x2="1" y2="0.600"><stop offset="0" stop-color="#ff9a3c"/><stop offset="0.600" stop-color="#ffc234"/><stop offset="1" stop-color="#ffb030"/></linearGradient></defs><path d="M14.800 0.200c1.200 2.400 2.400 3.600 3.800 5.200 2.600 2.200 4 5 4 8.400C22.600 19.400 17.600 23.600 11.500 23.600S0.400 19.400 0.400 13.600c0-3.200 1-6.400 3.200-9.200.2 1 .5 1.600 1 2.200C5.200 5.800 6 5 6.800 4.600c.2 1 .6 1.600 1.200 2.200C9.200 6.200 10.400 6 11.400 6.200 11.800 3.600 13 1.400 14.800 0.200z" fill="url(#fba)"/><circle cx="11.500" cy="12.200" r="4.900" fill="url(#fbb)"/><path d="M3.400 9.800c2.400-1 5-1 7.400.2 1 .6 1.200 1.200 1 1.800-2-.4-3.800.2-4.800 1.600-.6 1-.8 2-.6 3C4.600 15.400 3.400 12.800 3.400 9.800z" fill="url(#fbc)"/><path d="M8.200 6.800c1.400-.6 3.800-.6 5.600.8-.8.200-1.400.6-1.600 1-1-1-2.600-1.400-4-1.800z" fill="#ff9a3c"/></svg>
<div class="abs" style="left:343px;top:5px;height:30px;line-height:30px;font-size:13.800px;letter-spacing:-0.478px;color:#2e3436;white-space:nowrap">Temperature and status scan @ car...</div>
<div class="abs" style="left:1568px;top:5px;width:54px;height:27px;box-sizing:border-box;border:1px solid #d2d2d2;border-radius:4px 0 0 4px;background:#ededed;overflow:hidden"><div class="abs" style="left:0;top:0;width:31px;height:14px;background:#dcdcdc"></div><div class="abs" style="left:30px;top:1px;width:21px;height:12px;box-sizing:border-box;border:1px solid #cdcdcd;background:#ececec"></div><div class="abs" style="left:0;top:13px;width:52px;height:2px;background:#d4d4d4"></div><div class="abs" style="left:50px;top:0;width:2px;height:25px;background:#dadada"></div></div>
<div class="abs ws" style="left:1625px"></div>
<div class="abs" style="left:1683px;top:7px;width:52px;height:24px;box-sizing:border-box;border:2px solid #858585;background:#f6f5f4;box-shadow:0 0 0 1px #d9d9d9"></div>
<div class="abs ws" style="left:1739px"></div>
<div class="abs ws" style="left:1796px"></div>
<div class="abs ws" style="left:1853px"></div>
</div>
</div>
</body>
</html>
